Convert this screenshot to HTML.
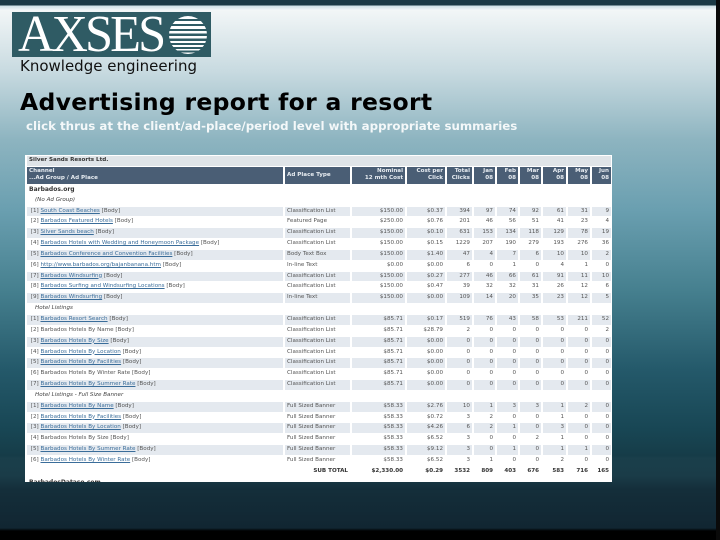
<!DOCTYPE html>
<html><head><meta charset="utf-8"><style>
*{margin:0;padding:0;box-sizing:border-box}
body{width:720px;height:540px;overflow:hidden;position:relative;font-family:"DejaVu Sans","Liberation Sans",sans-serif;
background:linear-gradient(to bottom,#1c3a45 0,#1c3a45 5px,#cfe0e5 6px,#f2f6f7 10px,#c9dbe1 70px,#8db4c0 140px,#6a9fb0 210px,#46808f 290px,#24596a 370px,#184654 430px,#163c48 456px,#1a3f4b 458px,#1a3c48 476px,#142e3a 490px,#112632 528px,#000 531px)}
.rb{position:absolute;right:0;top:0;width:4px;height:540px;background:#0a0a0a}
.logo{position:absolute;left:12px;top:12px;width:199px;height:45px;background:#2f5b64;overflow:hidden}
.logo .t{position:absolute;left:6px;top:-7px;font-family:"Liberation Serif",serif;color:#fff;font-size:52px;letter-spacing:-3px;line-height:60px;transform:scaleX(.97);transform-origin:left}
.logo svg{position:absolute;left:156px;top:3px}
.kn{position:absolute;left:20px;top:57px;font-family:"DejaVu Sans",sans-serif;font-size:15px;color:#111}
h1{position:absolute;left:20px;top:88px;font-size:23.5px;font-weight:bold;color:#000;letter-spacing:.3px}
.sub{position:absolute;left:26px;top:119px;font-size:11.8px;font-weight:bold;color:#f4f8f9}
.box{position:absolute;left:25px;top:155px;width:587px;height:327px;background:#fff;overflow:hidden}
table{border-collapse:separate;border-spacing:2px 1px;table-layout:fixed;width:587px;font-size:5.6px;color:#555}
td{height:9.85px;padding:0 2px;white-space:nowrap;overflow:hidden;line-height:9.85px}
.ti td{background:#dfe4e8;font-weight:bold;color:#333;height:9px}
.hd td{background:#4a5e75;color:#e8edf2;font-weight:bold;height:17px;line-height:7px;text-align:right}
.hd td:first-child{text-align:left}
.s td{background:#e4e9ef}
.r td:nth-child(n+3),.s td:nth-child(n+3){text-align:right}
a{color:#3a6d9a;text-decoration:underline}
.g{font-weight:bold;color:#333;font-size:6px}
.i{font-style:italic;color:#444;padding-left:8px}
.st td{font-weight:bold;text-align:right;color:#333}
</style></head><body>
<div class="rb"></div>
<div class="logo"><div class="t">AXSES</div>
<svg width="40" height="40" viewBox="0 0 40 40"><defs><clipPath id="c"><circle cx="20" cy="20" r="19"/></clipPath></defs>
<g clip-path="url(#c)" fill="#fff"><rect x="0" y="1" width="40" height="3"/><rect x="0" y="6" width="40" height="3"/><rect x="0" y="11" width="40" height="3"/><rect x="0" y="16" width="40" height="2.5"/><rect x="0" y="21" width="40" height="2.5"/><rect x="0" y="26" width="40" height="2"/><rect x="0" y="30" width="40" height="2"/><rect x="0" y="34" width="40" height="1.5"/><rect x="0" y="37.5" width="40" height="1.5"/></g></svg></div>
<div class="kn">Knowledge engineering</div>
<h1>Advertising report for a resort</h1>
<div class="sub">click thrus at the client/ad-place/period level with appropriate summaries</div>
<div class="box"><table>
<colgroup><col style="width:256px"><col style="width:65px"><col style="width:53px"><col style="width:38px"><col style="width:25px"><col style="width:21px"><col style="width:21px"><col style="width:21px"><col style="width:23px"><col style="width:22px"><col style="width:19px"></colgroup>
<tr class="ti"><td colspan="11">Silver Sands Resorts Ltd.</td></tr>
<tr class="hd"><td>Channel<br>...Ad Group / Ad Place</td><td style="text-align:left">Ad Place Type</td><td>Nominal<br>12 mth Cost</td><td>Cost per<br>Click</td><td>Total<br>Clicks</td><td>Jan<br>08</td><td>Feb<br>08</td><td>Mar<br>08</td><td>Apr<br>08</td><td>May<br>08</td><td>Jun<br>08</td></tr>
<tr><td colspan="11" class="g">Barbados.org</td></tr>
<tr><td colspan="11" class="i">(No Ad Group)</td></tr>
<tr class="s"><td>&nbsp;[1] <a>South Coast Beaches</a> [Body]</td><td>Classification List</td><td>$150.00</td><td>$0.37</td><td>394</td><td>97</td><td>74</td><td>92</td><td>61</td><td>31</td><td>9</td></tr>
<tr class="r"><td>&nbsp;[2] <a>Barbados Featured Hotels</a> [Body]</td><td>Featured Page</td><td>$250.00</td><td>$0.76</td><td>201</td><td>46</td><td>56</td><td>51</td><td>41</td><td>23</td><td>4</td></tr>
<tr class="s"><td>&nbsp;[3] <a>Silver Sands beach</a> [Body]</td><td>Classification List</td><td>$150.00</td><td>$0.10</td><td>631</td><td>153</td><td>134</td><td>118</td><td>129</td><td>78</td><td>19</td></tr>
<tr class="r"><td>&nbsp;[4] <a>Barbados Hotels with Wedding and Honeymoon Package</a> [Body]</td><td>Classification List</td><td>$150.00</td><td>$0.15</td><td>1229</td><td>207</td><td>190</td><td>279</td><td>193</td><td>276</td><td>36</td></tr>
<tr class="s"><td>&nbsp;[5] <a>Barbados Conference and Convention Facilities</a> [Body]</td><td>Body Text Box</td><td>$150.00</td><td>$1.40</td><td>47</td><td>4</td><td>7</td><td>6</td><td>10</td><td>10</td><td>2</td></tr>
<tr class="r"><td>&nbsp;[6] <a>http://www.barbados.org/bajanbanana.htm</a> [Body]</td><td>In-line Text</td><td>$0.00</td><td>$0.00</td><td>6</td><td>0</td><td>1</td><td>0</td><td>4</td><td>1</td><td>0</td></tr>
<tr class="s"><td>&nbsp;[7] <a>Barbados Windsurfing</a> [Body]</td><td>Classification List</td><td>$150.00</td><td>$0.27</td><td>277</td><td>46</td><td>66</td><td>61</td><td>91</td><td>11</td><td>10</td></tr>
<tr class="r"><td>&nbsp;[8] <a>Barbados Surfing and Windsurfing Locations</a> [Body]</td><td>Classification List</td><td>$150.00</td><td>$0.47</td><td>39</td><td>32</td><td>32</td><td>31</td><td>26</td><td>12</td><td>6</td></tr>
<tr class="s"><td>&nbsp;[9] <a>Barbados Windsurfing</a> [Body]</td><td>In-line Text</td><td>$150.00</td><td>$0.00</td><td>109</td><td>14</td><td>20</td><td>35</td><td>23</td><td>12</td><td>5</td></tr>
<tr><td colspan="11" class="i">Hotel Listings</td></tr>
<tr class="s"><td>&nbsp;[1] <a>Barbados Resort Search</a> [Body]</td><td>Classification List</td><td>$85.71</td><td>$0.17</td><td>519</td><td>76</td><td>43</td><td>58</td><td>53</td><td>211</td><td>52</td></tr>
<tr class="r"><td>&nbsp;[2] Barbados Hotels By Name [Body]</td><td>Classification List</td><td>$85.71</td><td>$28.79</td><td>2</td><td>0</td><td>0</td><td>0</td><td>0</td><td>0</td><td>2</td></tr>
<tr class="s"><td>&nbsp;[3] <a>Barbados Hotels By Size</a> [Body]</td><td>Classification List</td><td>$85.71</td><td>$0.00</td><td>0</td><td>0</td><td>0</td><td>0</td><td>0</td><td>0</td><td>0</td></tr>
<tr class="r"><td>&nbsp;[4] <a>Barbados Hotels By Location</a> [Body]</td><td>Classification List</td><td>$85.71</td><td>$0.00</td><td>0</td><td>0</td><td>0</td><td>0</td><td>0</td><td>0</td><td>0</td></tr>
<tr class="s"><td>&nbsp;[5] <a>Barbados Hotels By Facilities</a> [Body]</td><td>Classification List</td><td>$85.71</td><td>$0.00</td><td>0</td><td>0</td><td>0</td><td>0</td><td>0</td><td>0</td><td>0</td></tr>
<tr class="r"><td>&nbsp;[6] Barbados Hotels By Winter Rate [Body]</td><td>Classification List</td><td>$85.71</td><td>$0.00</td><td>0</td><td>0</td><td>0</td><td>0</td><td>0</td><td>0</td><td>0</td></tr>
<tr class="s"><td>&nbsp;[7] <a>Barbados Hotels By Summer Rate</a> [Body]</td><td>Classification List</td><td>$85.71</td><td>$0.00</td><td>0</td><td>0</td><td>0</td><td>0</td><td>0</td><td>0</td><td>0</td></tr>
<tr><td colspan="11" class="i">Hotel Listings - Full Size Banner</td></tr>
<tr class="s"><td>&nbsp;[1] <a>Barbados Hotels By Name</a> [Body]</td><td>Full Sized Banner</td><td>$58.33</td><td>$2.76</td><td>10</td><td>1</td><td>3</td><td>3</td><td>1</td><td>2</td><td>0</td></tr>
<tr class="r"><td>&nbsp;[2] <a>Barbados Hotels By Facilities</a> [Body]</td><td>Full Sized Banner</td><td>$58.33</td><td>$0.72</td><td>3</td><td>2</td><td>0</td><td>0</td><td>1</td><td>0</td><td>0</td></tr>
<tr class="s"><td>&nbsp;[3] <a>Barbados Hotels By Location</a> [Body]</td><td>Full Sized Banner</td><td>$58.33</td><td>$4.26</td><td>6</td><td>2</td><td>1</td><td>0</td><td>3</td><td>0</td><td>0</td></tr>
<tr class="r"><td>&nbsp;[4] Barbados Hotels By Size [Body]</td><td>Full Sized Banner</td><td>$58.33</td><td>$6.52</td><td>3</td><td>0</td><td>0</td><td>2</td><td>1</td><td>0</td><td>0</td></tr>
<tr class="s"><td>&nbsp;[5] <a>Barbados Hotels By Summer Rate</a> [Body]</td><td>Full Sized Banner</td><td>$58.33</td><td>$9.12</td><td>3</td><td>0</td><td>1</td><td>0</td><td>1</td><td>1</td><td>0</td></tr>
<tr class="r"><td>&nbsp;[6] <a>Barbados Hotels By Winter Rate</a> [Body]</td><td>Full Sized Banner</td><td>$58.33</td><td>$6.52</td><td>3</td><td>1</td><td>0</td><td>0</td><td>2</td><td>0</td><td>0</td></tr>
<tr class="st"><td></td><td>SUB TOTAL</td><td>$2,330.00</td><td>$0.29</td><td>3532</td><td>809</td><td>403</td><td>676</td><td>583</td><td>716</td><td>165</td></tr>
<tr><td colspan="11" class="g">BarbadosDataso.com</td></tr>
</table></div>
</body></html>
